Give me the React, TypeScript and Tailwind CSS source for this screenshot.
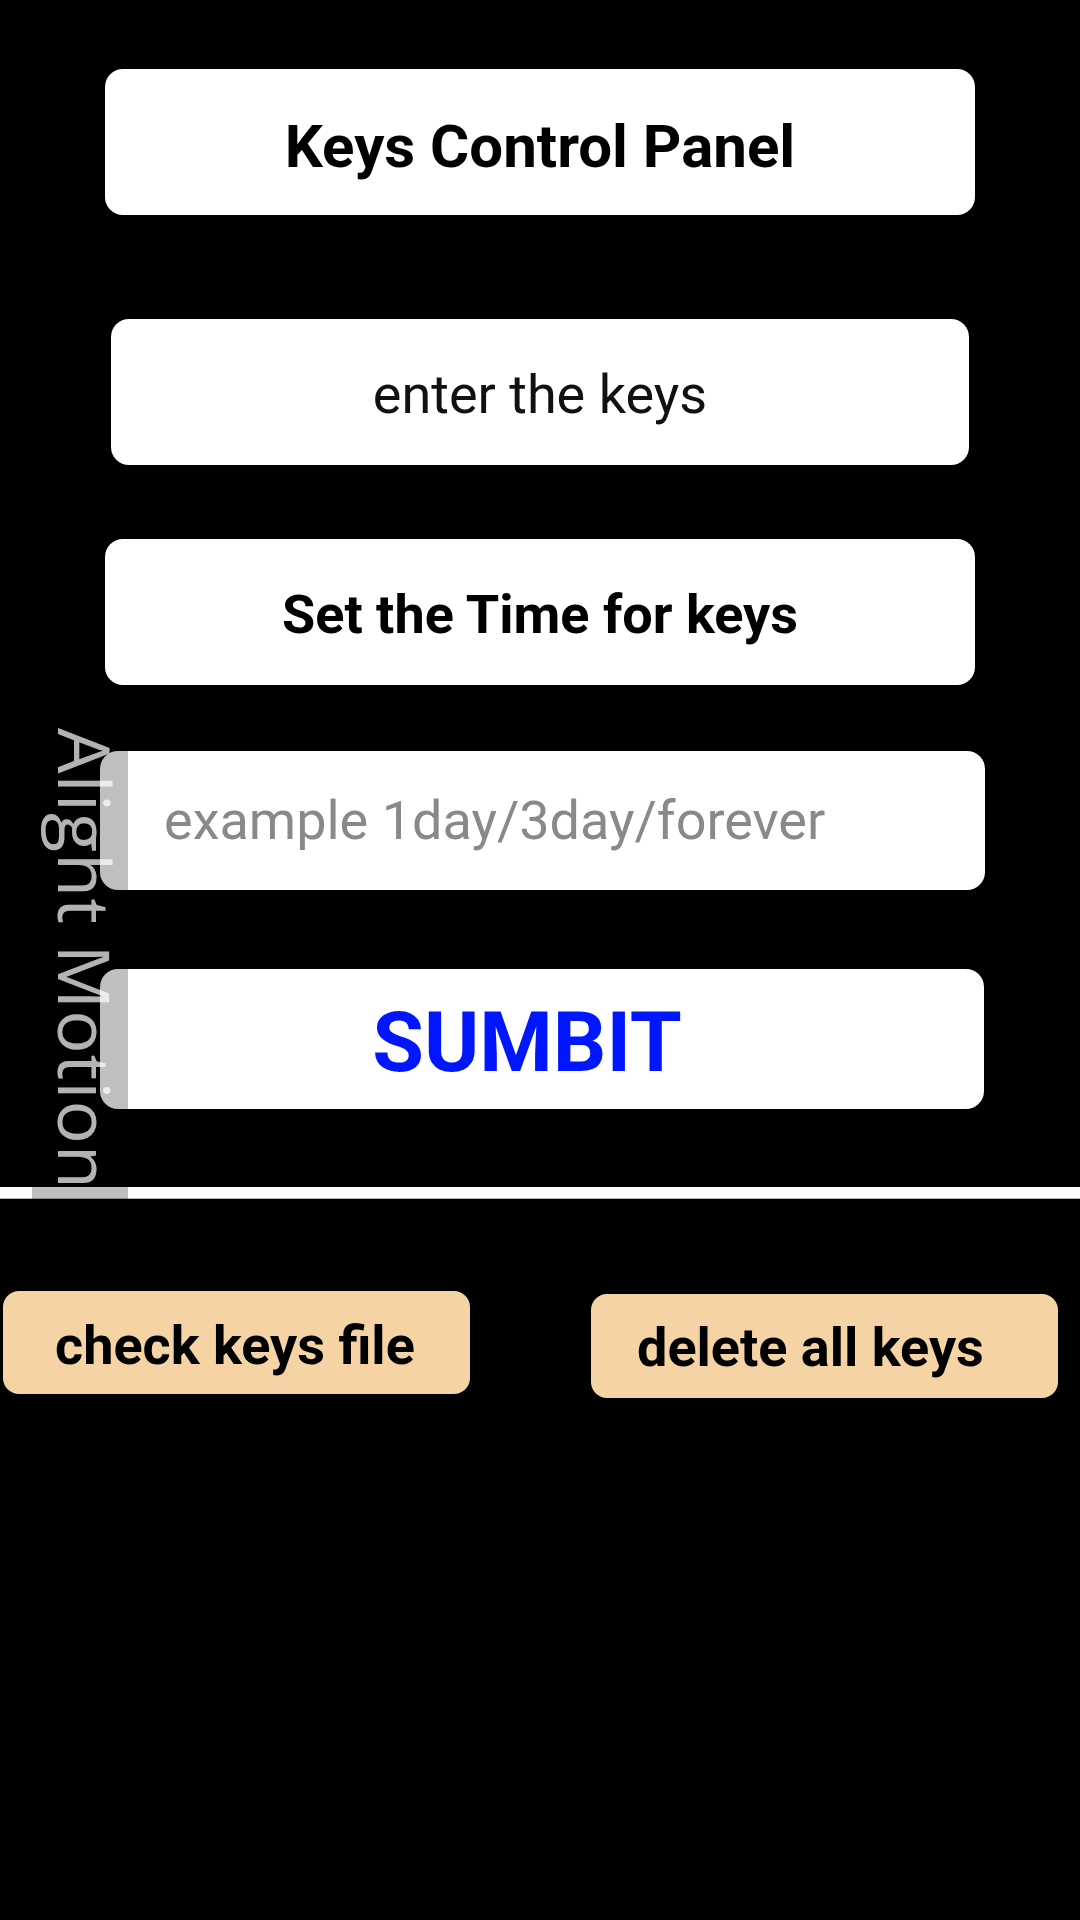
import React from "react";

const App = () => {
  return (
    <main className="relative flex min-h-screen w-full flex-col bg-black font-['Roboto',sans-serif]">
      {/* header card */}
      <div className="ml-[105px] mt-[69px] flex h-[146px] w-[870px] items-center justify-center rounded-[18px] bg-white pt-[10px] text-[60px] font-bold text-black">
        Keys Control Panel
      </div>

      <div className="ml-[111px] mt-[104px] flex h-[146px] w-[858px] items-center justify-center rounded-[18px] bg-white pt-[5px] text-[54px] text-[#111]">
        enter the keys
      </div>

      <div className="ml-[105px] mt-[74px] flex h-[146px] w-[870px] items-center justify-center rounded-[18px] bg-white pt-[5px] text-[54px] font-bold text-black">
        Set the Time for keys
      </div>

      <input
        type="text"
        placeholder="example 1day/3day/forever"
        className="ml-[100px] mt-[66px] h-[139px] w-[885px] rounded-[18px] bg-white pl-[64px] text-[54px] text-black outline-none placeholder:text-[#898989]"
      />

      <button className="ml-[100px] mt-[79px] flex h-[140px] w-[884px] items-center justify-center rounded-[18px] bg-white pr-[30px] pt-[8px] text-[84px] font-bold text-[#0016ff]">
        SUMBIT
      </button>

      <div className="mt-[78px] h-[12px] w-full border-b border-[#b5b5b5] bg-white" />

      <div className="mt-[92px] flex items-start">
        <button className="ml-[3px] flex h-[103px] w-[467px] items-center rounded-[16px] bg-[#f6d3a5] pl-[52px] pt-[5px] text-[54px] font-bold text-black">
          check keys file
        </button>
        <button className="ml-[121px] mt-[3px] flex h-[104px] w-[467px] items-center rounded-[16px] bg-[#f6d3a5] pl-[46px] pt-[2px] text-[54px] font-bold text-black">
          delete all keys
        </button>
      </div>

      {/* watermark overlay */}
      <div className="absolute left-[32px] top-[725px] h-[474px] w-[96px] bg-black/25" />
      <div className="absolute left-[50px] top-[728px] text-[72px] leading-none tracking-[1px] text-white/70 [writing-mode:vertical-rl] font-['Open_Sans',sans-serif]">
        Alight Motion
      </div>
    </main>
  );
};

export default App;
